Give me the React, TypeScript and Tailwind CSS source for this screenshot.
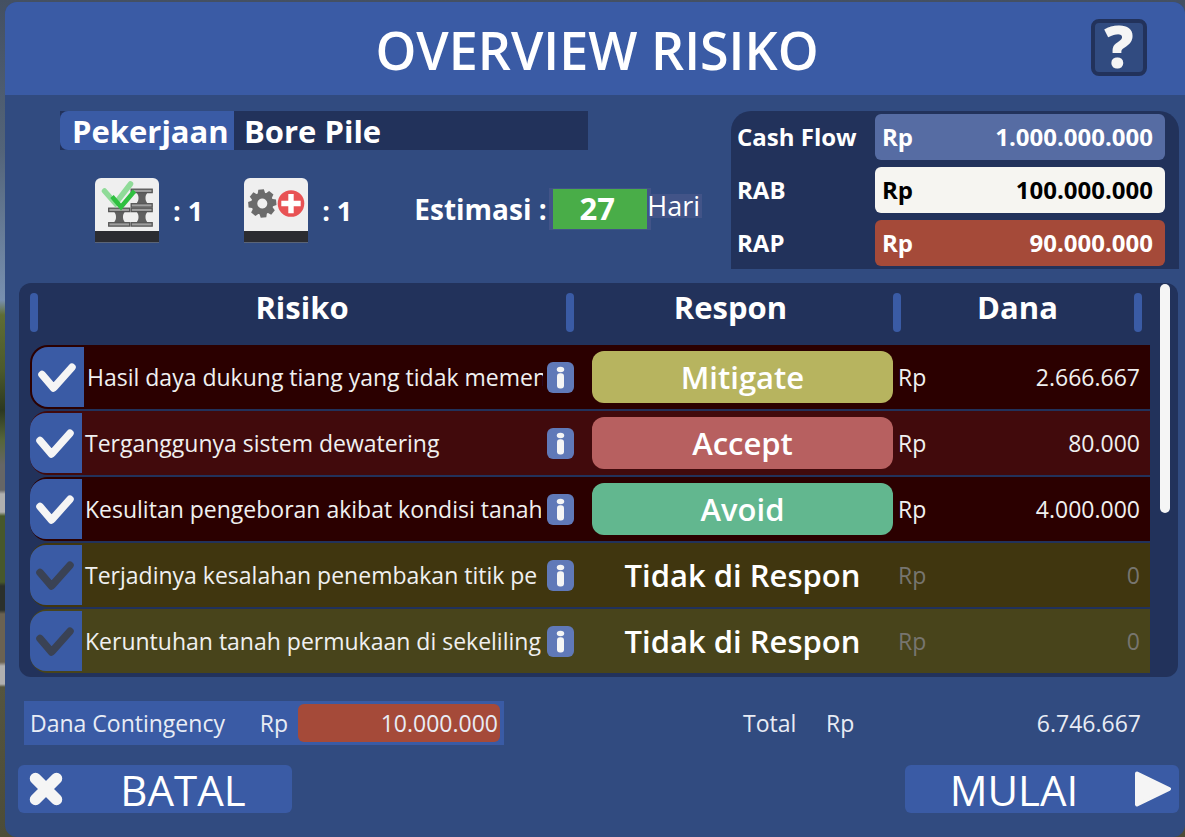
import React from "react";

type Risk = {
  name: string;
  respon: string | null;
  dana: string;
  rowClass: string;
  buttonClass: string;
  selected?: boolean;
};

const risks: Risk[] = [
  {
    name: "Hasil daya dukung tiang yang tidak memen",
    respon: "Mitigate",
    dana: "2.666.667",
    rowClass: "bg-[#2b0000]",
    buttonClass: "bg-[#b7b45f]",
    selected: true,
  },
  {
    name: "Terganggunya sistem dewatering",
    respon: "Accept",
    dana: "80.000",
    rowClass: "bg-[#410a0c]",
    buttonClass: "bg-[#b76060]",
  },
  {
    name: "Kesulitan pengeboran akibat kondisi tanah",
    respon: "Avoid",
    dana: "4.000.000",
    rowClass: "bg-[#2b0000]",
    buttonClass: "bg-[#62b78f]",
  },
  {
    name: "Terjadinya kesalahan penembakan titik pe",
    respon: null,
    dana: "0",
    rowClass: "bg-[#40360f]",
    buttonClass: "",
  },
  {
    name: "Keruntuhan tanah permukaan di sekeliling",
    respon: null,
    dana: "0",
    rowClass: "bg-[#48441b]",
    buttonClass: "",
  },
];

const budgets = [
  { label: "Cash Flow", value: "1.000.000.000", className: "bg-[#566ca3] text-white" },
  { label: "RAB", value: "100.000.000", className: "bg-[#f6f5f1] text-black" },
  { label: "RAP", value: "90.000.000", className: "bg-[#a54a39] text-white" },
];

function Bar() {
  return <span className="h-[39px] w-2 shrink-0 rounded bg-[#3a5ba5]" />;
}

function BeamIcon() {
  const beam = (x: number, y: number) => (
    <g key={`${x}-${y}`} transform={`translate(${x} ${y})`}>
      <path d="M6 4 H17 C15.5 6 15 7.500 15 9.500 C15 11.500 15.500 13 17 15 H6 C7.500 13 8 11.500 8 9.500 C8 7.500 7.500 6 6 4Z" fill="#606060" />
      <rect x="0.700" y="0.700" width="21" height="3.400" fill="#a0a0a0" stroke="#555" strokeWidth="1.300" />
      <rect x="0.700" y="15.200" width="21" height="3.400" fill="#a0a0a0" stroke="#555" strokeWidth="1.300" />
    </g>
  );
  return (
    <svg viewBox="0 0 64 53" className="h-[53px] w-16" aria-hidden="true">
      {beam(13, 29.5)}
      {beam(35.5, 10.5)}
      {beam(35.5, 29.5)}
      <path d="M9.500 13 L20.500 25.500 L35.500 6" fill="none" stroke="#8fdb98" strokeWidth="5.500" strokeLinecap="round" />
      <path d="M17 18.500 L26 29 L39.500 13" fill="none" stroke="#2fc040" strokeWidth="4.500" />
    </svg>
  );
}

function GearPlusIcon() {
  return (
    <svg viewBox="0 0 64 53" className="h-[53px] w-16" aria-hidden="true">
      <g transform="translate(18.300 25.500) rotate(-5)">
        {[0, 45, 90, 135, 180, 225, 270, 315].map((a) => (
          <path key={a} d="M-4 -9 L-2.800 -14 H2.800 L4 -9Z" fill="#6b6b6b" transform={`rotate(${a})`} />
        ))}
        <circle r="8" fill="none" stroke="#6b6b6b" strokeWidth="6" />
      </g>
      <circle cx="47" cy="25.500" r="13.300" fill="#e85254" />
      <path d="M44.300 16 h5.400 v6.800 h7 v5.400 h-7 v7 h-5.400 v-7 h-7 v-5.400 h7Z" fill="#fff" />
    </svg>
  );
}

function Resource({ children, count }: { children: React.ReactNode; count: string }) {
  return (
    <div className="flex items-center gap-3.5">
      <div className="h-[65px] w-16 overflow-hidden rounded-t-md border-b border-[#5a6478] bg-[#efefef]">
        {children}
        <div className="h-3 bg-[#2b2c31]" />
      </div>
      <span className="text-[27px] font-bold leading-8">{count}</span>
    </div>
  );
}

function InfoIcon() {
  return (
    <svg viewBox="0 0 27 31" className="h-[31px] w-[27px]" aria-hidden="true">
      <rect width="27" height="31" rx="6" fill="#6079b8" />
      <ellipse cx="13.500" cy="7.500" rx="3.700" ry="2.800" fill="#f5f5f5" />
      <rect x="10" y="11.300" width="7" height="15.300" rx="3" fill="#f5f5f5" />
    </svg>
  );
}

function RiskRow({ risk }: { risk: Risk }) {
  const active = risk.respon !== null;
  const id = `risk-${risk.name.split(" ").slice(0, 2).join("-").toLowerCase()}`;
  return (
    <tr>
      <td className="p-0">
        <div className={`mb-0.5 flex h-16 items-center rounded-l-[18px] ${risk.rowClass} ${risk.selected ? "pl-0.5" : ""}`}>
          <span className="relative flex h-[60px] w-[52px] shrink-0 items-center">
            <input
              id={id}
              type="checkbox"
              defaultChecked={active}
              className="peer size-full appearance-none rounded-l-2xl bg-[#3a5ba5]"
            />
            <svg
              viewBox="0 0 38 29"
              className="pointer-events-none absolute left-1.5 h-[29px] w-[38px] text-[#3a4254] peer-checked:text-[#f5f5f5]"
              aria-hidden="true"
            >
              <path d="M4 11.500 L15.500 25 M16.200 24.200 L34 4.200" fill="none" stroke="currentColor" strokeWidth="7.500" strokeLinecap="round" strokeLinejoin="round" />
            </svg>
          </span>
          <label
            htmlFor={id}
            className={`min-w-0 flex-1 overflow-hidden whitespace-nowrap pl-[3px] text-[23px] leading-8 text-[#f0f0f0] ${risk.selected ? "mr-1" : "mr-1.5"}`}
          >
            {risk.name}
          </label>
          <button type="button" aria-label="Info" className="shrink-0">
            <InfoIcon />
          </button>
        </div>
      </td>
      <td className="p-0">
        <div className={`mb-0.5 flex h-16 items-center pl-[18px] text-[31px] font-semibold leading-9 ${risk.rowClass}`}>
          {active ? (
            <button type="button" className={`h-[52px] w-full rounded-xl ${risk.buttonClass}`}>
              {risk.respon}
            </button>
          ) : (
            <span className="w-full text-center">Tidak di Respon</span>
          )}
        </div>
      </td>
      <td className="p-0">
        <div
          className={`mb-0.5 flex h-16 items-center justify-between pl-[5px] pr-2.5 text-[23px] leading-8 ${risk.rowClass} ${active ? "text-[#f0f0f0]" : "text-[#77756f]"}`}
        >
          <span>Rp</span>
          <span>{risk.dana}</span>
        </div>
      </td>
    </tr>
  );
}

export default function App() {
  return (
    <div className="min-h-screen bg-[linear-gradient(to_bottom,#445062_0px,#536479_150px,#7890b0_300px,#5f6d35_315px,#4c5a2c_370px,#2c3820_410px,#56663a_440px,#666_465px,#666_490px,#b0b0b0_494px,#b0b0b0_512px,#47582c_516px,#47582c_582px,#2b302c_586px,#2b302c_610px,#6b6252_614px,#6b6252_662px,#b0b0b0_666px,#b0b0b0_684px,#55553f_687px,#4c4c38_837px)] pl-[5px] pt-0.5 font-['Open_Sans',sans-serif] text-white">
      <main className="flex min-h-[calc(100vh-2px)] flex-col overflow-hidden rounded-xl bg-[#314b80]">
        <header className="grid h-[93px] grid-cols-[1fr_auto_1fr] items-center bg-[#3a5ba5] pb-0.5 pr-[38px]">
          <h1 className="col-start-2 pl-[42px] pt-1 text-[52px] font-semibold leading-[60px]">OVERVIEW RISIKO</h1>
          <button
            type="button"
            aria-label="Bantuan"
            className="flex h-[57px] w-14 items-center justify-center justify-self-end rounded-lg border-4 border-[#22325b] bg-[#314b80] pb-1 text-[58px] font-extrabold leading-none text-[#f5f5f5]"
          >
            ?
          </button>
        </header>

        <section className="flex justify-between pl-[55px] pr-1.5 pt-4">
          <div>
            <div className="flex h-[39px] w-[528px] items-center bg-[#22325b] text-[31px] font-bold leading-9">
              <span className="flex h-full w-[174px] items-center rounded-l-lg bg-[#3a5ba5] pl-3">Pekerjaan</span>
              <span className="pl-2.5">Bore Pile</span>
            </div>
            <div className="mt-7 flex items-center pl-[35px]">
              <Resource count=": 1">
                <BeamIcon />
              </Resource>
              <div className="ml-[41px]">
                <Resource count=": 1">
                  <GearPlusIcon />
                </Resource>
              </div>
              <div className="ml-[62px] flex items-center pb-1">
                <span className="w-[135px] text-[28px] font-bold leading-8">Estimasi :</span>
                <span className="flex h-[42px] w-[102px] items-center justify-center border-x-4 border-y border-[#425488] bg-[#49ad48] pb-0.5 pr-1.5 text-[31px] font-bold leading-9">
                  27
                </span>
                <span className="-ml-1 mb-1.5 bg-[#425488] pr-0.5 text-[27px] leading-6">Hari</span>
              </div>
            </div>
          </div>
          <dl className="flex w-[448px] flex-col gap-[7px] rounded-t-[20px] bg-[#22325b] py-[3px] pl-1.5 pr-3.5 text-[24px] font-bold leading-8">
            {budgets.map((b) => (
              <div key={b.label} className="flex items-center justify-between">
                <dt>{b.label}</dt>
                <dd className={`flex h-[46px] w-[290px] items-center justify-between rounded-md pl-[7px] pr-3 ${b.className}`}>
                  <span>Rp</span>
                  <span>{b.value}</span>
                </dd>
              </div>
            ))}
          </dl>
        </section>

        <section className="ml-3.5 mr-[7px] mt-3.5 flex gap-2.5 rounded-xl bg-[#22325b] pb-0.5 pl-[11px] pr-2">
          <div className="min-w-0 flex-1">
            <table className="w-full table-fixed border-collapse">
              <colgroup>
                <col />
                <col className="w-[319px]" />
                <col className="w-[257px]" />
              </colgroup>
              <thead>
                <tr className="text-[31px] font-bold leading-9">
                  <th scope="col" className="p-0">
                    <div className="flex h-[62px] justify-between pt-2.5">
                      <Bar />
                      <span className="-mt-1">Risiko</span>
                      <Bar />
                    </div>
                  </th>
                  <th scope="col" className="p-0">
                    <div className="flex h-[62px] justify-center pr-1.5 pt-2.5">
                      <span className="-mt-1">Respon</span>
                    </div>
                  </th>
                  <th scope="col" className="p-0">
                    <div className="flex h-[62px] justify-between pr-2 pt-2.5">
                      <Bar />
                      <span className="-mt-1">Dana</span>
                      <Bar />
                    </div>
                  </th>
                </tr>
              </thead>
              <tbody>
                {risks.map((r) => (
                  <RiskRow key={r.name} risk={r} />
                ))}
              </tbody>
            </table>
          </div>
          <div className="w-2.5 shrink-0 pt-px">
            <div className="h-[229px] rounded-full bg-[#f5f5f5]" />
          </div>
        </section>

        <section className="mt-6 flex items-center justify-between pl-[19px] pr-11 text-[23px] leading-8 text-[#e8ecf5]">
          <div className="flex h-11 w-[480px] items-center bg-[#3a5ba5] pl-1.5 pr-1">
            <label htmlFor="contingency" className="flex-1">
              Dana Contingency
            </label>
            <span className="mr-2.5">Rp</span>
            <input
              id="contingency"
              type="text"
              defaultValue="10.000.000"
              className="h-[38px] w-[202px] rounded-md bg-[#a54a39] pr-0.5 text-right"
            />
          </div>
          <div className="flex w-[398px]">
            <span className="w-[83px]">Total</span>
            <span>Rp</span>
            <span className="flex-1 text-right">6.746.667</span>
          </div>
        </section>

        <footer className="mt-5 flex justify-between pb-6 pl-[13px] pr-1.5 text-[42px] leading-[48px]">
          <button type="button" className="flex h-12 w-[274px] items-center rounded-md bg-[#3a5ba5] pl-2.5">
            <svg viewBox="0 0 36 36" className="size-9" aria-hidden="true">
              <path d="M7.500 7.500 L28.500 28.500 M28.500 7.500 L7.500 28.500" stroke="#f5f5f5" strokeWidth="11.500" strokeLinecap="round" />
            </svg>
            <span className="flex-1 pl-2.5 pt-0.5 text-center">BATAL</span>
          </button>
          <button type="button" className="flex h-12 w-[274px] items-center rounded-md bg-[#3a5ba5] pr-2">
            <span className="flex-1 pr-3 pt-0.5 text-center">MULAI</span>
            <svg viewBox="0 0 36 36" className="size-9" aria-hidden="true">
              <path d="M2 2.500 L34 18 L2 33.500Z" fill="#f5f5f5" stroke="#f5f5f5" strokeWidth="4" strokeLinejoin="round" />
            </svg>
          </button>
        </footer>
      </main>
    </div>
  );
}
